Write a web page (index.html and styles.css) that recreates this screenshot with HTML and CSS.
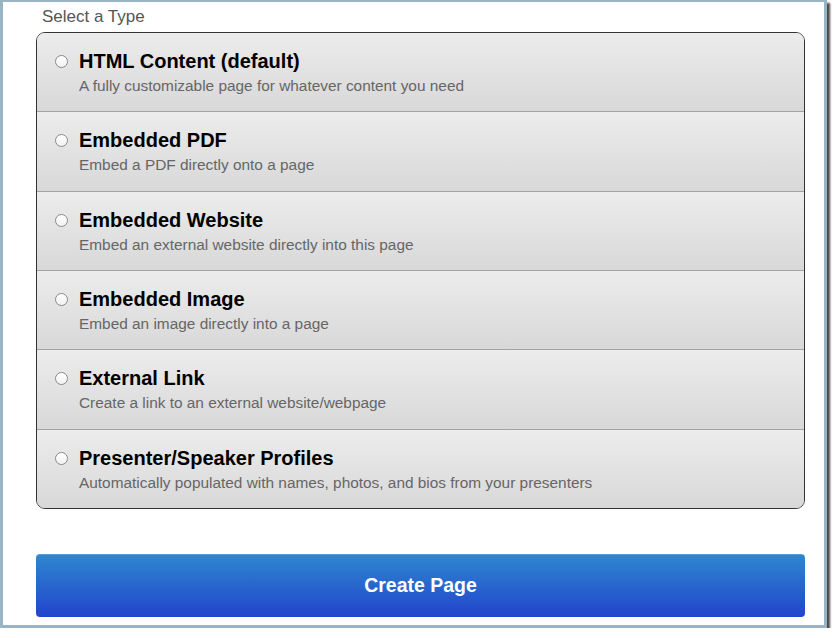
FILE: index.html
```html
<!doctype html>
<html>

<head lang="en">
  <meta charset="utf-8">
  <title>Create Page</title>
  <link rel="stylesheet" href="styles.css">
</head>

<body>
  <div class="window">
    <div class="content">
      <div class="label">Select a Type</div>

      <div class="types">
        <label class="type">
          <input type="radio" name="type" value="html" />
          <span class="text">
            <span class="title">HTML Content (default)</span>
            <span class="desc">A fully customizable page for whatever content you need</span>
          </span>
        </label>
        <label class="type">
          <input type="radio" name="type" value="pdf" />
          <span class="text">
            <span class="title">Embedded PDF</span>
            <span class="desc">Embed a PDF directly onto a page</span>
          </span>
        </label>
        <label class="type">
          <input type="radio" name="type" value="website" />
          <span class="text">
            <span class="title">Embedded Website</span>
            <span class="desc">Embed an external website directly into this page</span>
          </span>
        </label>
        <label class="type">
          <input type="radio" name="type" value="image" />
          <span class="text">
            <span class="title">Embedded Image</span>
            <span class="desc">Embed an image directly into a page</span>
          </span>
        </label>
        <label class="type">
          <input type="radio" name="type" value="link" />
          <span class="text">
            <span class="title">External Link</span>
            <span class="desc">Create a link to an external website/webpage</span>
          </span>
        </label>
        <label class="type">
          <input type="radio" name="type" value="presenters" />
          <span class="text">
            <span class="title">Presenter/Speaker Profiles</span>
            <span class="desc">Automatically populated with names, photos, and bios from your presenters</span>
          </span>
        </label>
      </div>

      <button class="create" type="button">Create Page</button>
    </div>
  </div>
</body>

</html>
```

FILE: styles.css
```css
body {
  font-family: "Liberation Sans", Arial, Helvetica, sans-serif;
  margin: 0;
  background: #fff;
}

.window {
  width: 821px;
  border: 3px solid #9bb4c3;
  border-top-width: 2px;
  box-shadow: 3px 3px 2px #4a4a4a;
}

.content {
  padding: 5px 19px 8px 33px;
  background: #fff;
}

.label {
  font-size: 17px;
  line-height: 20px;
  color: #555;
  padding-left: 6px;
  margin-bottom: 5px;
}

.types {
  border: 1px solid #333;
  border-radius: 9px;
  overflow: hidden;
}

.type {
  display: flex;
  align-items: flex-start;
  padding: 16px 16px 16px 18px;
  height: 46.33px;
  background: linear-gradient(#ececec, #d8d8d8);
  border-bottom: 1px solid #a3a3a3;
  cursor: pointer;
}

.type:last-child {
  border-bottom: none;
}

.type input {
  appearance: none;
  -webkit-appearance: none;
  width: 13px;
  height: 13px;
  margin: 6px 11px 0 0;
  border: 1px solid #8a8a8a;
  border-radius: 50%;
  background: linear-gradient(#fff, #f2f2f2);
  flex-shrink: 0;
}

.type input:checked {
  background: radial-gradient(#2a6fd0 35%, #fff 40%);
}

.text {
  display: flex;
  flex-direction: column;
}

.title {
  font-size: 20px;
  line-height: 24px;
  font-weight: bold;
  color: #000;
}

.desc {
  font-size: 15.4px;
  line-height: 18px;
  color: #666;
  margin-top: 4px;
}

.create {
  display: block;
  width: 100%;
  height: 63px;
  margin-top: 45px;
  border: none;
  border-radius: 4px;
  background: linear-gradient(#2e88d0, #2244cc);
  box-shadow: inset 0 1px 0 rgba(255, 255, 255, .2);
  color: white;
  font-family: "Liberation Sans", Arial, Helvetica, sans-serif;
  font-size: 19.5px;
  font-weight: bold;
  cursor: pointer;
}
```
